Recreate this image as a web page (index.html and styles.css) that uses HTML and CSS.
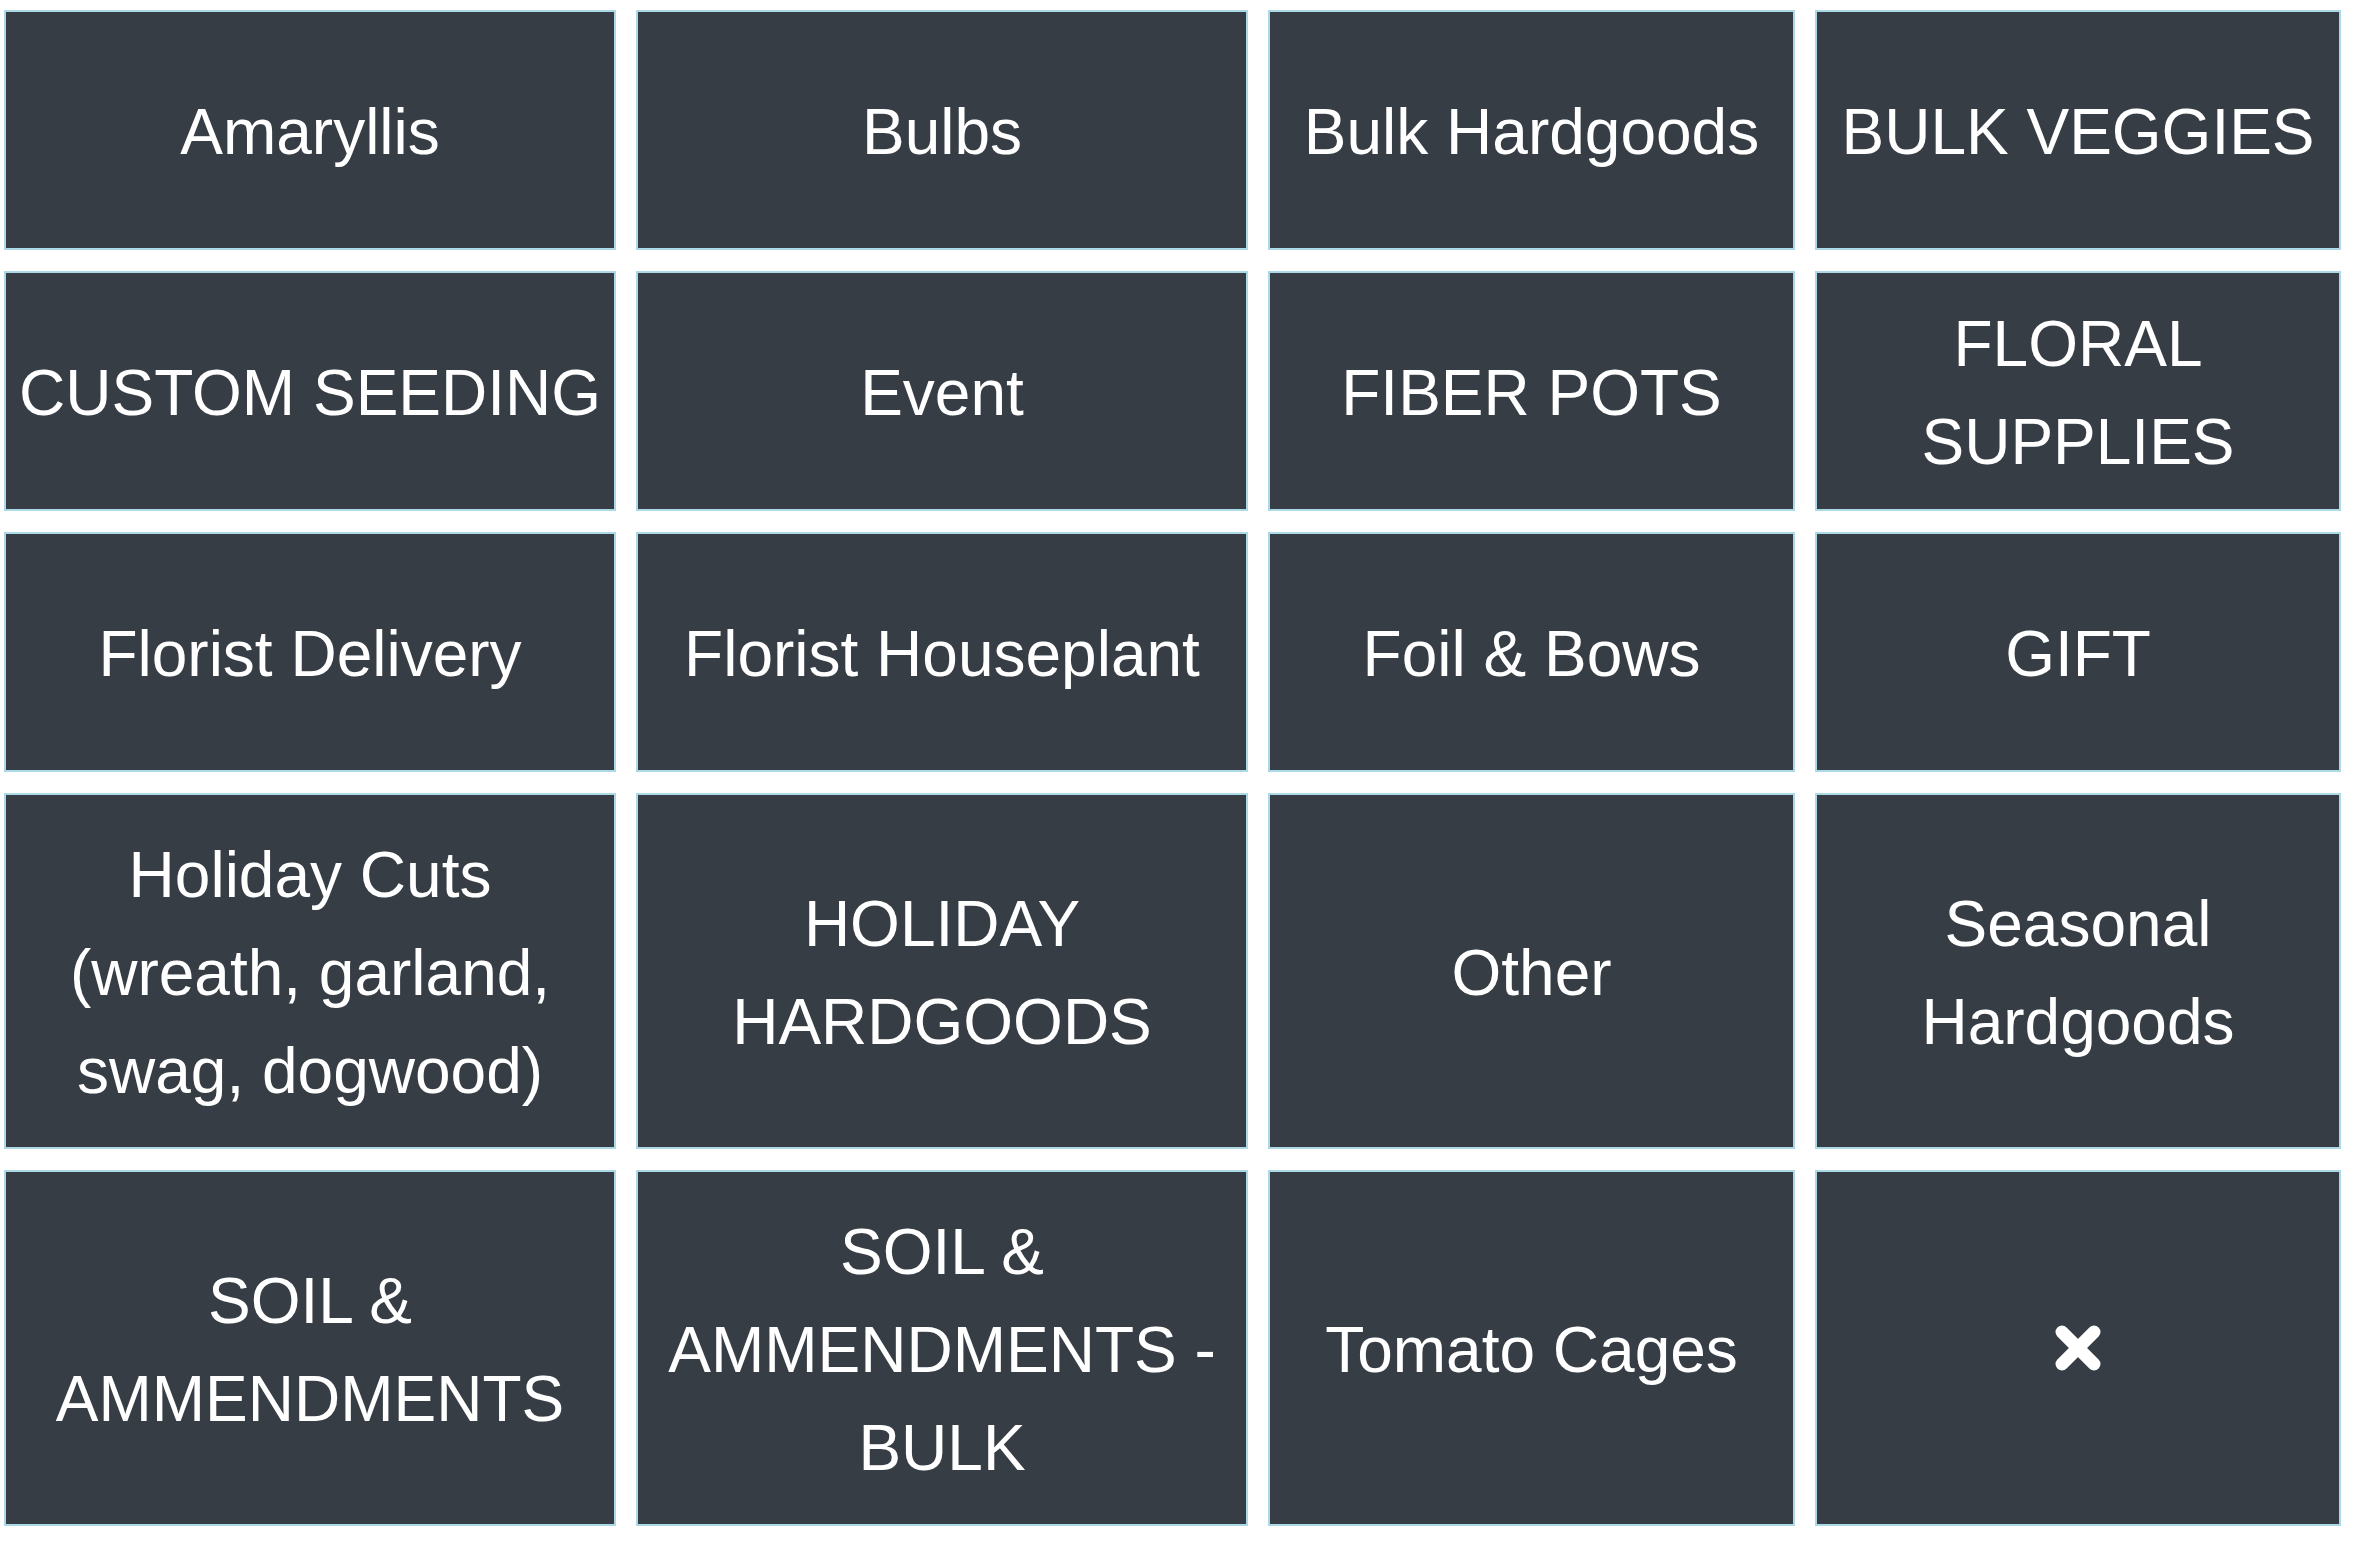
FILE: index.html
```html
<!DOCTYPE html>
<html lang="en">
<head>
<meta charset="utf-8">
<title>Categories</title>
<link rel="stylesheet" href="styles.css">
</head>
<body>
<div class="grid">
  <div class="cell">Amaryllis</div>
  <div class="cell">Bulbs</div>
  <div class="cell">Bulk Hardgoods</div>
  <div class="cell">BULK VEGGIES</div>

  <div class="cell">CUSTOM SEEDING</div>
  <div class="cell">Event</div>
  <div class="cell">FIBER POTS</div>
  <div class="cell">FLORAL SUPPLIES</div>

  <div class="cell">Florist Delivery</div>
  <div class="cell">Florist Houseplant</div>
  <div class="cell">Foil &amp; Bows</div>
  <div class="cell">GIFT</div>

  <div class="cell">Holiday Cuts (wreath, garland, swag, dogwood)</div>
  <div class="cell">HOLIDAY HARDGOODS</div>
  <div class="cell">Other</div>
  <div class="cell">Seasonal Hardgoods</div>

  <div class="cell">SOIL &amp; AMMENDMENTS</div>
  <div class="cell">SOIL &amp; AMMENDMENTS - BULK</div>
  <div class="cell">Tomato Cages</div>
  <div class="cell cell-close">
    <svg class="close-icon" width="46" height="46" viewBox="0 0 46 46" aria-label="close">
      <line x1="7" y1="7" x2="39" y2="39" />
      <line x1="39" y1="7" x2="7" y2="39" />
    </svg>
  </div>
</div>
</body>
</html>
```
FILE: styles.css
```css
html, body {
  margin: 0;
  padding: 0;
  background: #ffffff;
}

body {
  font-family: "Liberation Sans", Arial, Helvetica, sans-serif;
}

.grid {
  display: grid;
  grid-template-columns: 612px 612px 527px 526px;
  grid-template-rows: 240px 240px 240px minmax(240px, auto) minmax(240px, auto);
  column-gap: 20px;
  row-gap: 21px;
  padding: 10px 0 0 4px;
}

.cell {
  box-sizing: border-box;
  display: flex;
  align-items: center;
  justify-content: center;
  text-align: center;
  background: #363d44;
  border: 2px solid #add8e6;
  color: #ffffff;
  font-size: 64px;
  line-height: 98px;
  padding: 31px 10px 27px;
}

.cell-close {
  padding-top: 29px;
  padding-bottom: 29px;
}

.close-icon {
  display: block;
}

.close-icon line {
  stroke: #ffffff;
  stroke-width: 13;
  stroke-linecap: round;
}
```
